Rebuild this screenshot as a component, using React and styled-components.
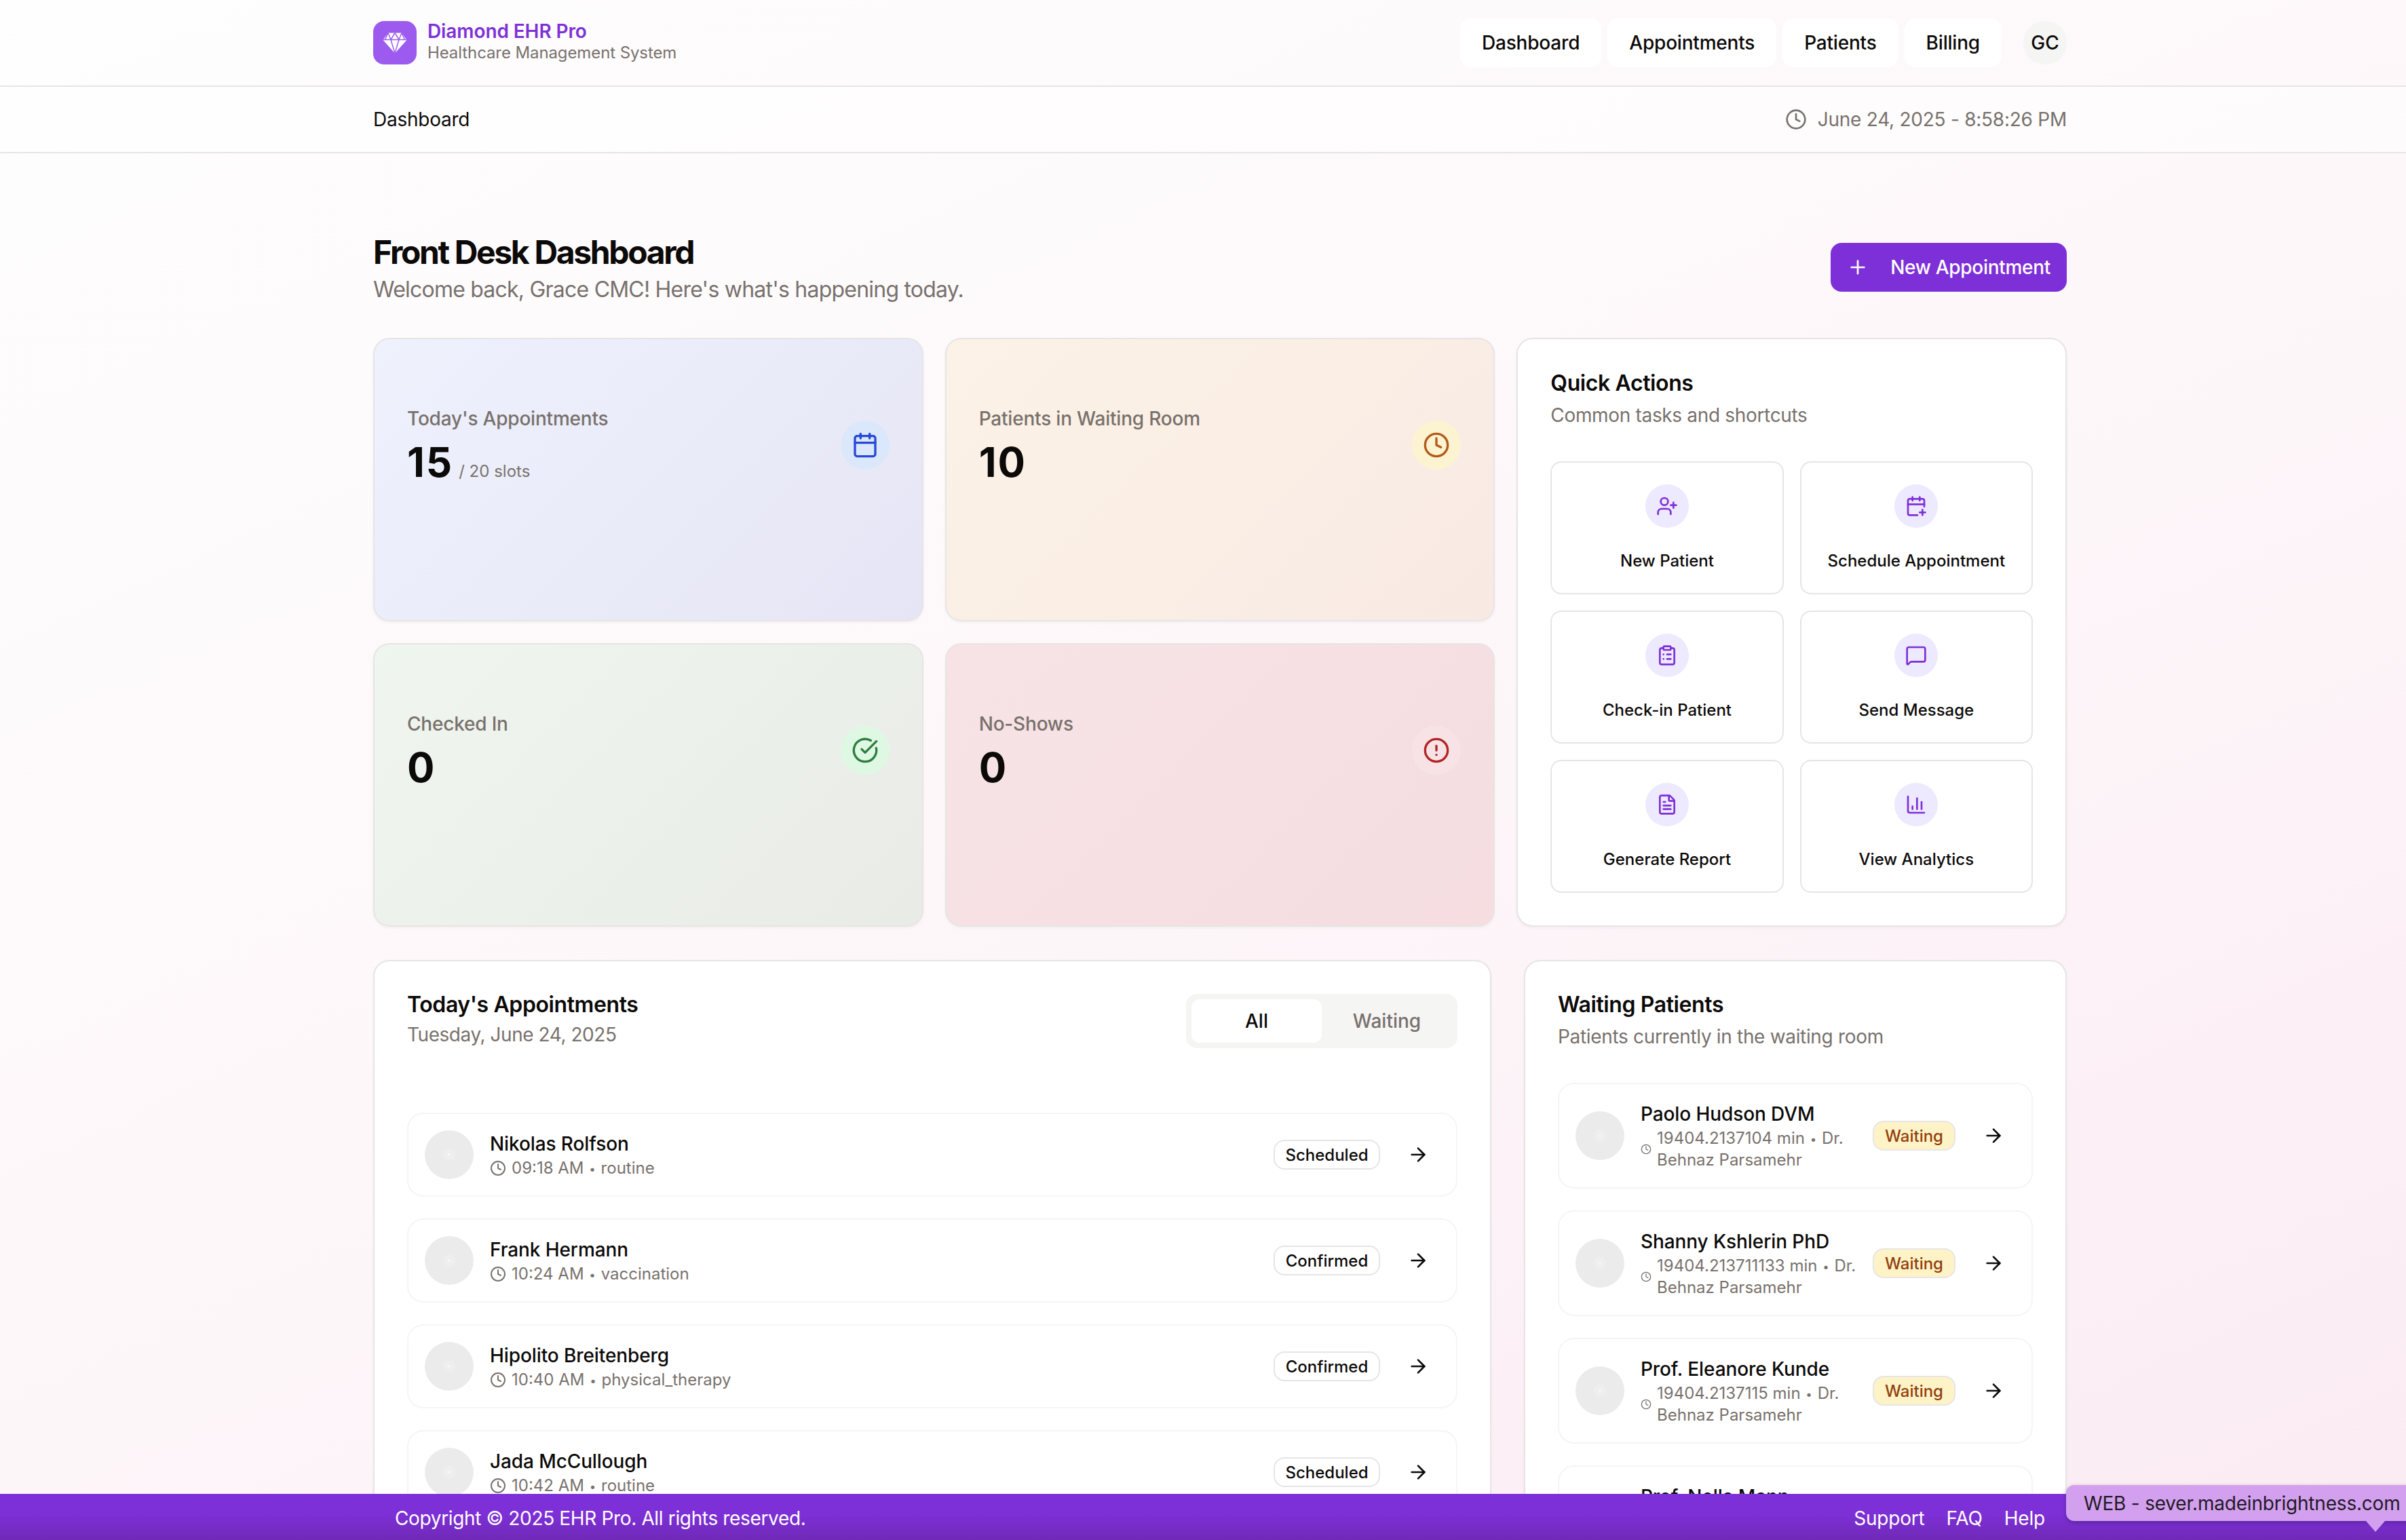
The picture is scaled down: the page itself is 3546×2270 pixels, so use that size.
import React from "react";
import styled, { createGlobalStyle } from "styled-components";
import {
  ArrowRight,
  Calendar,
  CalendarPlus,
  ChartColumn,
  CircleAlert,
  CircleCheckBig,
  ClipboardList,
  Clock,
  FileText,
  MessageSquare,
  Plus,
  UserPlus,
} from "lucide-react";

const GlobalStyle = createGlobalStyle`
  html, body {
    margin: 0;
    height: 100%;
    overflow: hidden;
  }
  body {
    font-family: Inter, "Liberation Sans", sans-serif;
    color: #0c0a09;
    background: linear-gradient(155deg, #fefefe 0%, #fdf6f9 55%, #fbebf3 100%);
  }
  * { box-sizing: border-box; }
`;

const purple = "#7e30d8";
const gray = "#78716c";

const stats = [
  {
    label: "Today's Appointments",
    value: "15",
    note: "/ 20 slots",
    icon: Calendar,
    from: "#eef2fd",
    to: "#e6e5f5",
    circle: "#dbe8fb",
    tint: "#2748d8",
  },
  {
    label: "Patients in Waiting Room",
    value: "10",
    icon: Clock,
    from: "#fcf2e7",
    to: "#f8eae3",
    circle: "#fcf4d1",
    tint: "#b45a1c",
  },
  {
    label: "Checked In",
    value: "0",
    icon: CircleCheckBig,
    from: "#eff6ef",
    to: "#e9ebe6",
    circle: "#dff8e4",
    tint: "#2e7d3e",
  },
  {
    label: "No-Shows",
    value: "0",
    icon: CircleAlert,
    from: "#f7e3e6",
    to: "#f5dde0",
    circle: "#f7e3e5",
    tint: "#b32424",
  },
];

const actions = [
  { label: "New Patient", icon: UserPlus },
  { label: "Schedule Appointment", icon: CalendarPlus },
  { label: "Check-in Patient", icon: ClipboardList },
  { label: "Send Message", icon: MessageSquare },
  { label: "Generate Report", icon: FileText },
  { label: "View Analytics", icon: ChartColumn },
];

const appointments = [
  { name: "Nikolas Rolfson", time: "09:18 AM", kind: "routine", status: "Scheduled" },
  { name: "Frank Hermann", time: "10:24 AM", kind: "vaccination", status: "Confirmed" },
  { name: "Hipolito Breitenberg", time: "10:40 AM", kind: "physical_therapy", status: "Confirmed" },
  { name: "Jada McCullough", time: "10:42 AM", kind: "routine", status: "Scheduled" },
];

const waiting = [
  { name: "Paolo Hudson DVM", wait: "19404.2137104" },
  { name: "Shanny Kshlerin PhD", wait: "19404.213711133" },
  { name: "Prof. Eleanore Kunde", wait: "19404.2137115" },
  { name: "Prof. Nella Mann", wait: "19404.2137121" },
];

function DiamondMark() {
  return (
    <svg width="36" height="31" viewBox="0 0 36 31" fill="none">
      <path d="M8 0.5H28L35.5 11L18 30.5L0.5 11Z" fill="#fff" />
      <path
        d="M0.5 10.5H35.5M8 0.5L3.5 10.5M8 0.5L12 10.5M18 0.5L12 10.5M18 0.5L24 10.5M28 0.5L24 10.5M28 0.5L32.5 10.5M12 10.5L18 30.5M24 10.5L18 30.5"
        stroke="#9c5bee"
        strokeWidth="1.5"
      />
    </svg>
  );
}

export default function App() {
  return (
    <Page>
      <GlobalStyle />
      <Header>
        <HeaderInner>
          <Brand>
            <LogoTile>
              <DiamondMark />
            </LogoTile>
            <div>
              <BrandName>Diamond EHR Pro</BrandName>
              <BrandTag>Healthcare Management System</BrandTag>
            </div>
          </Brand>
          <Nav>
            {["Dashboard", "Appointments", "Patients", "Billing"].map((item) => (
              <NavButton key={item}>{item}</NavButton>
            ))}
            <UserChip>GC</UserChip>
          </Nav>
        </HeaderInner>
      </Header>

      <SubBar>
        <SubBarInner>
          <span>Dashboard</span>
          <DateLabel>
            <Clock size={32} strokeWidth={2} />
            June 24, 2025 - 8:58:26 PM
          </DateLabel>
        </SubBarInner>
      </SubBar>

      <Main>
        <Content>
          <TitleRow>
            <div>
              <PageTitle>Front Desk Dashboard</PageTitle>
              <PageSubtitle>
                Welcome back, Grace CMC! Here's what's happening today.
              </PageSubtitle>
            </div>
            <PrimaryButton>
              <Plus size={32} strokeWidth={2} />
              New Appointment
            </PrimaryButton>
          </TitleRow>

          <TopGrid>
            <StatGrid>
              {stats.map((stat) => (
                <StatCard key={stat.label} $from={stat.from} $to={stat.to}>
                  <div>
                    <StatLabel>{stat.label}</StatLabel>
                    <StatValue>
                      {stat.value}
                      {stat.note && <StatNote>{stat.note}</StatNote>}
                    </StatValue>
                  </div>
                  <StatIcon $bg={stat.circle} $color={stat.tint}>
                    <stat.icon size={40} strokeWidth={2} />
                  </StatIcon>
                </StatCard>
              ))}
            </StatGrid>

            <QuickCard>
              <CardTitle>Quick Actions</CardTitle>
              <CardSubtitle>Common tasks and shortcuts</CardSubtitle>
              <ActionGrid>
                {actions.map((action) => (
                  <ActionButton key={action.label}>
                    <ActionIcon>
                      <action.icon size={32} strokeWidth={2} />
                    </ActionIcon>
                    {action.label}
                  </ActionButton>
                ))}
              </ActionGrid>
            </QuickCard>
          </TopGrid>

          <BottomGrid>
            <ListCard>
              <ListHead>
                <div>
                  <CardTitle>Today's Appointments</CardTitle>
                  <DateLine>Tuesday, June 24, 2025</DateLine>
                </div>
                <Tabs>
                  <Tab $active>All</Tab>
                  <Tab>Waiting</Tab>
                </Tabs>
              </ListHead>
              <RowStack>
                {appointments.map((item) => (
                  <Row key={item.name}>
                    <Avatar />
                    <RowInfo>
                      <RowName>{item.name}</RowName>
                      <RowMeta>
                        <Clock size={24} strokeWidth={2} />
                        <span>
                          {item.time} <Dot>•</Dot> {item.kind}
                        </span>
                      </RowMeta>
                    </RowInfo>
                    <StatusBadge>{item.status}</StatusBadge>
                    <RowArrow>
                      <ArrowRight size={32} strokeWidth={2} />
                    </RowArrow>
                  </Row>
                ))}
              </RowStack>
            </ListCard>

            <ListCard>
              <CardTitle>Waiting Patients</CardTitle>
              <CardSubtitle>Patients currently in the waiting room</CardSubtitle>
              <WaitingStack>
                {waiting.map((item) => (
                  <Row key={item.name}>
                    <Avatar />
                    <RowInfo>
                      <RowName>{item.name}</RowName>
                      <RowMeta>
                        <Clock size={16} strokeWidth={2} />
                        <span>
                          {item.wait} min <Dot>•</Dot> Dr. Behnaz Parsamehr
                        </span>
                      </RowMeta>
                    </RowInfo>
                    <WaitingBadge>Waiting</WaitingBadge>
                    <RowArrow>
                      <ArrowRight size={32} strokeWidth={2} />
                    </RowArrow>
                  </Row>
                ))}
              </WaitingStack>
            </ListCard>
          </BottomGrid>
        </Content>
      </Main>

      <Footer>
        <FooterInner>
          <Copyright>Copyright © 2025 EHR Pro. All rights reserved.</Copyright>
          <FooterLinks>
            <span>Support</span>
            <span>FAQ</span>
            <span>Help</span>
          </FooterLinks>
        </FooterInner>
      </Footer>

      <ServerTip>WEB - sever.madeinbrightness.com - production</ServerTip>
    </Page>
  );
}

const Page = styled.div`
  position: relative;
  height: 100vh;
  display: flex;
  flex-direction: column;
  overflow: hidden;
`;

const Header = styled.header`
  flex: none;
  height: 128px;
  border-bottom: 2px solid #e7e5e4;
`;

const HeaderInner = styled.div`
  width: 2496px;
  height: 100%;
  margin-left: 550px;
  display: flex;
  align-items: center;
  justify-content: space-between;
`;

const Brand = styled.div`
  display: flex;
  align-items: center;
  gap: 16px;
`;

const LogoTile = styled.div`
  width: 64px;
  height: 64px;
  border-radius: 16px;
  background: #9c5bee;
  display: flex;
  align-items: center;
  justify-content: center;
`;

const BrandName = styled.div`
  margin-top: -3px;
  font-size: 28px;
  line-height: 32px;
  font-weight: 600;
  letter-spacing: -0.1px;
  color: ${purple};
`;

const BrandTag = styled.div`
  font-size: 24px;
  line-height: 32px;
  letter-spacing: -0.1px;
  color: ${gray};
`;

const Nav = styled.nav`
  display: flex;
  align-items: center;
  gap: 9px;
`;

const NavButton = styled.button`
  height: 72px;
  padding: 0 32px;
  border: 0;
  border-radius: 16px;
  background: #fff;
  font: 450 28px Inter, sans-serif;
  letter-spacing: -0.2px;
  color: #0c0a09;
`;

const UserChip = styled.div`
  width: 64px;
  height: 64px;
  margin-left: 23px;
  border-radius: 50%;
  background: #f5f5f4;
  display: flex;
  align-items: center;
  justify-content: center;
  font-size: 28px;
  font-weight: 450;
`;

const SubBar = styled.div`
  flex: none;
  height: 98px;
  background: rgba(255, 255, 255, 0.55);
  border-bottom: 2px solid #e7e5e4;
`;

const SubBarInner = styled.div`
  width: 2496px;
  height: 100%;
  margin-left: 550px;
  display: flex;
  align-items: center;
  justify-content: space-between;
  font-size: 28px;
  letter-spacing: -0.25px;
`;

const DateLabel = styled.div`
  display: flex;
  align-items: center;
  gap: 16px;
  color: ${gray};
`;

const Main = styled.main`
  flex: 1;
  min-height: 0;
  overflow: hidden;
`;

const Content = styled.div`
  width: 2496px;
  margin-left: 550px;
  padding-top: 112px;
`;

const TitleRow = styled.div`
  display: flex;
  align-items: center;
  justify-content: space-between;
  margin-bottom: 48px;
`;

const PageTitle = styled.h1`
  margin: 2px 0 0;
  font-size: 48px;
  line-height: 64px;
  font-weight: 700;
  letter-spacing: -2.35px;
`;

const PageSubtitle = styled.p`
  margin: 0;
  font-size: 32px;
  line-height: 46px;
  letter-spacing: -0.78px;
  color: ${gray};
`;

const PrimaryButton = styled.button`
  height: 72px;
  padding: 0 24px;
  display: flex;
  align-items: center;
  gap: 32px;
  border: 0;
  border-radius: 16px;
  background: ${purple};
  color: #fff;
  font: 450 28px Inter, sans-serif;
  letter-spacing: -0.3px;
`;

const TopGrid = styled.div`
  display: grid;
  grid-template-columns: repeat(3, minmax(0, 1fr));
  gap: 32px;
`;

const StatGrid = styled.div`
  grid-column: span 2;
  display: grid;
  grid-template-columns: repeat(2, minmax(0, 1fr));
  grid-auto-rows: 1fr;
  gap: 32px;
`;

const StatCard = styled.div`
  padding: 97px 48px 48px;
  display: flex;
  align-items: flex-start;
  justify-content: space-between;
  border: 2px solid #e7e5e4;
  border-radius: 24px;
  background: linear-gradient(135deg, ${(props) => props.$from}, ${(props) => props.$to});
  box-shadow: 0 2px 4px rgba(0, 0, 0, 0.04);
`;

const StatLabel = styled.div`
  font-size: 28px;
  line-height: 40px;
  font-weight: 450;
  letter-spacing: -0.2px;
  color: ${gray};
`;

const StatValue = styled.div`
  margin-top: 8px;
  font-size: 60px;
  line-height: 72px;
  font-weight: 700;
  letter-spacing: 2px;
`;

const StatNote = styled.span`
  margin-left: 8px;
  font-size: 24px;
  font-weight: 400;
  letter-spacing: 0;
  color: ${gray};
`;

const StatIcon = styled.div`
  width: 72px;
  height: 72px;
  margin-top: 23px;
  border-radius: 50%;
  background: ${(props) => props.$bg};
  color: ${(props) => props.$color};
  display: flex;
  align-items: center;
  justify-content: center;
`;

const Panel = styled.section`
  border: 2px solid #e7e5e4;
  border-radius: 24px;
  background: #fff;
  box-shadow: 0 2px 4px rgba(0, 0, 0, 0.04);
`;

const QuickCard = styled(Panel)`
  padding: 45px 48px 48px;
`;

const CardTitle = styled.h2`
  margin: 0;
  font-size: 32px;
  line-height: 40px;
  font-weight: 600;
  letter-spacing: -0.4px;
`;

const CardSubtitle = styled.p`
  margin: 7px 0 0;
  font-size: 28px;
  line-height: 40px;
  letter-spacing: -0.33px;
  color: ${gray};
`;

const ActionGrid = styled.div`
  margin-top: 48px;
  display: grid;
  grid-template-columns: repeat(2, minmax(0, 1fr));
  gap: 24px;
`;

const ActionButton = styled.button`
  height: 196px;
  padding: 32px 16px 0;
  display: flex;
  flex-direction: column;
  align-items: center;
  gap: 33px;
  border: 2px solid #e7e5e4;
  border-radius: 16px;
  background: #fff;
  color: #0c0a09;
  font: 450 24px/32px Inter, sans-serif;
`;

const ActionIcon = styled.span`
  width: 64px;
  height: 64px;
  border-radius: 50%;
  background: #ede9fe;
  color: ${purple};
  display: flex;
  align-items: center;
  justify-content: center;
`;

const BottomGrid = styled.div`
  margin-top: 49px;
  display: grid;
  grid-template-columns: minmax(0, 1fr) 800px;
  gap: 48px;
`;

const ListCard = styled(Panel)`
  padding: 44px 48px 48px;
  min-height: 1200px;
`;

const ListHead = styled.div`
  display: flex;
  align-items: flex-start;
  justify-content: space-between;
`;

const DateLine = styled.p`
  margin: 4px 0 0;
  font-size: 28px;
  line-height: 40px;
  letter-spacing: -0.45px;
  color: ${gray};
`;

const Tabs = styled.div`
  display: flex;
  width: 400px;
  height: 80px;
  margin-top: 4px;
  padding: 8px;
  border-radius: 16px;
  background: #f5f5f4;
`;

const Tab = styled.div`
  flex: 1;
  display: flex;
  align-items: center;
  justify-content: center;
  border-radius: 12px;
  font-size: 28px;
  font-weight: 450;
  color: ${(props) => (props.$active ? "#0c0a09" : gray)};
  background: ${(props) => (props.$active ? "#fff" : "transparent")};
`;

const RowStack = styled.div`
  margin-top: 95px;
  display: flex;
  flex-direction: column;
  gap: 32px;
`;

const WaitingStack = styled(RowStack)`
  margin-top: 48px;
`;

const Row = styled.div`
  padding: 24px;
  display: flex;
  align-items: center;
  border: 2px solid #f5f5f4;
  border-radius: 24px;
  background: #fff;
`;

const Avatar = styled.div`
  flex: none;
  width: 72px;
  height: 72px;
  margin-right: 24px;
  border-radius: 50%;
  background: radial-gradient(circle, #f6f6f6 0 2px, #e9e9e9 3px, #f0f0f0 4px, #ebebeb 11px);
`;

const RowInfo = styled.div`
  flex: 1;
  min-width: 0;
  margin-right: 16px;
`;

const RowName = styled.div`
  font-size: 28px;
  line-height: 40px;
  font-weight: 450;
  letter-spacing: -0.1px;
`;

const RowMeta = styled.div`
  display: flex;
  align-items: center;
  gap: 8px;
  font-size: 24px;
  line-height: 32px;
  color: ${gray};
  svg {
    flex: none;
  }
`;

const Dot = styled.span`
  font-size: 17px;
  line-height: 0;
  margin: 0 1px;
  vertical-align: 1px;
`;

const StatusBadge = styled.div`
  flex: none;
  width: 157px;
  height: 44px;
  margin-right: 24px;
  display: flex;
  align-items: center;
  justify-content: center;
  border: 2px solid #e7e5e4;
  border-radius: 16px;
  font-size: 24px;
  font-weight: 450;
  background: #fff;
`;

const WaitingBadge = styled(StatusBadge)`
  width: 122px;
  background: #fef3c7;
  color: #92400e;
`;

const RowArrow = styled.div`
  flex: none;
  width: 64px;
  height: 64px;
  display: flex;
  align-items: center;
  justify-content: center;
`;

const Footer = styled.footer`
  flex: none;
  height: 68px;
  background: linear-gradient(180deg, #7e30d8 40%, #7029b8 100%);
  color: #fff;
  font-size: 28px;
`;

const FooterInner = styled.div`
  width: 2496px;
  height: 100%;
  margin-left: 550px;
  padding: 3px 32px 0;
  display: flex;
  align-items: center;
  justify-content: space-between;
`;

const Copyright = styled.span`
  letter-spacing: -0.35px;
`;

const FooterLinks = styled.div`
  display: flex;
  gap: 32px;
  letter-spacing: -0.2px;
`;

const ServerTip = styled.div`
  position: absolute;
  left: 3045px;
  top: 2189px;
  width: 640px;
  height: 53px;
  padding-left: 26px;
  display: flex;
  align-items: center;
  white-space: nowrap;
  border-radius: 12px;
  background: #d3a0ef;
  color: #1f1a24;
  font-size: 28px;
  letter-spacing: -0.2px;
  box-shadow: 0 2px 6px rgba(0, 0, 0, 0.25);
  &::after {
    content: "";
    position: absolute;
    left: 442px;
    top: 53px;
    border-left: 14px solid transparent;
    border-right: 14px solid transparent;
    border-top: 16px solid #d3a0ef;
  }
`;
